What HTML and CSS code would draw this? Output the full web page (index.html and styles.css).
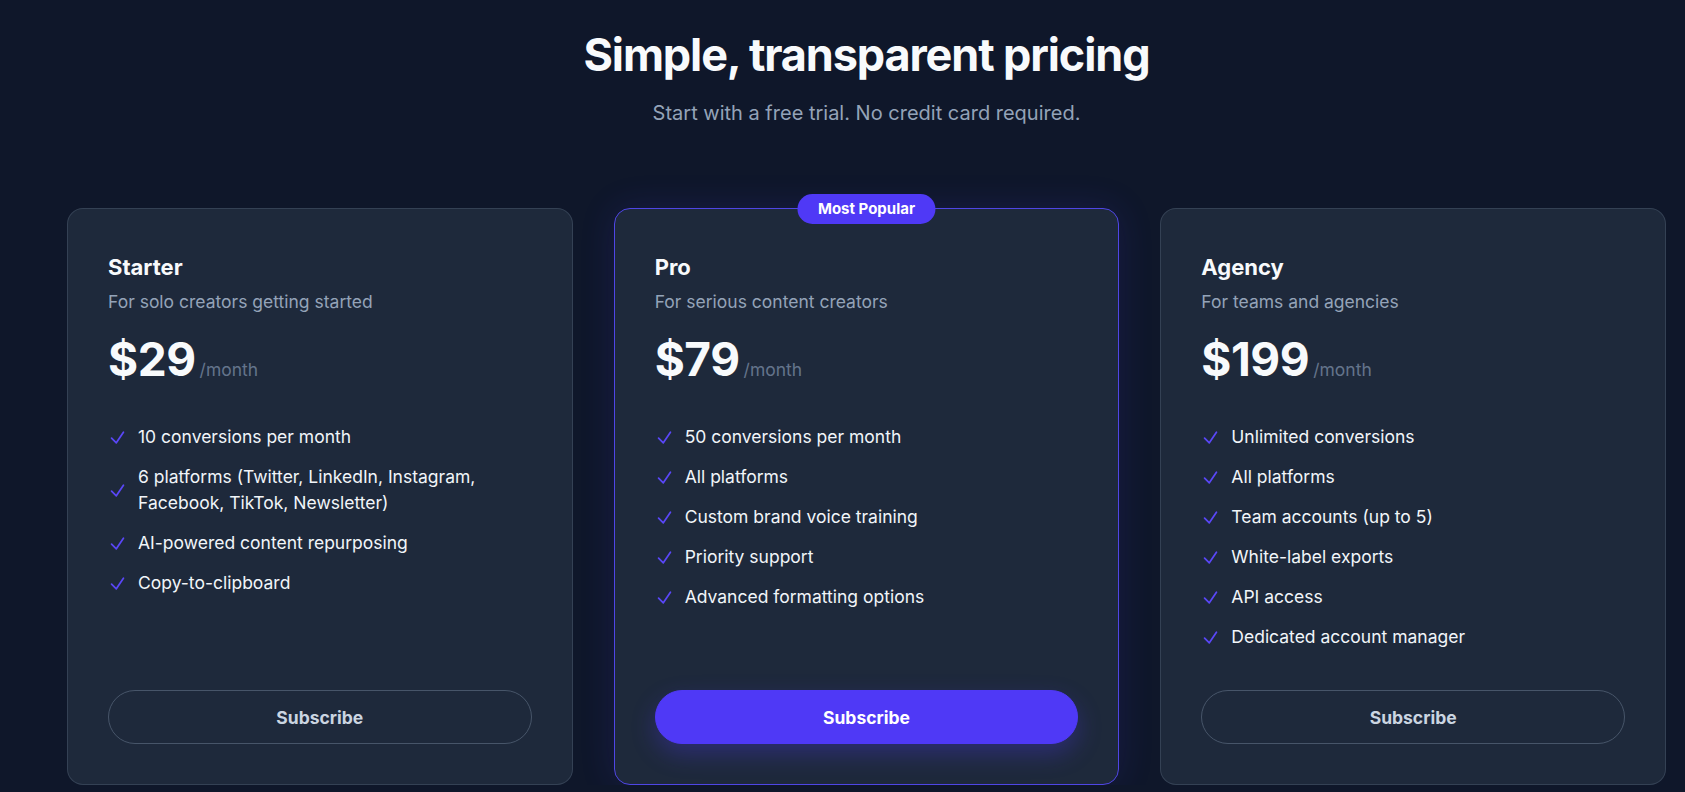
FILE: index.html
```html
<!DOCTYPE html>
<html lang="en">
<head>
  <meta charset="UTF-8">
  <meta name="viewport" content="width=device-width, initial-scale=1.0">
  <title>Pricing</title>
  <link rel="stylesheet" href="styles.css">
</head>
<body>
  <div class="pricing">
    <div class="pricing-header">
      <h1>Simple, transparent pricing</h1>
      <p class="subtitle">Start with a free trial. No credit card required.</p>
    </div>

    <div class="plans">
      <div class="plan">
        <h3 class="plan-name">Starter</h3>
        <p class="plan-description">For solo creators getting started</p>
        <div class="price">
          <span class="amount">$29</span>
          <span class="period">/month</span>
        </div>
        <ul class="features">
          <li><svg class="check" viewBox="0 0 24 24"><path d="M4.5 12.75l6 6 9-13.5"/></svg><span>10 conversions per month</span></li>
          <li><svg class="check" viewBox="0 0 24 24"><path d="M4.5 12.75l6 6 9-13.5"/></svg><span>6 platforms (Twitter, LinkedIn, Instagram, Facebook, TikTok, Newsletter)</span></li>
          <li><svg class="check" viewBox="0 0 24 24"><path d="M4.5 12.75l6 6 9-13.5"/></svg><span>AI-powered content repurposing</span></li>
          <li><svg class="check" viewBox="0 0 24 24"><path d="M4.5 12.75l6 6 9-13.5"/></svg><span>Copy-to-clipboard</span></li>
        </ul>
        <button class="subscribe">Subscribe</button>
      </div>

      <div class="plan featured">
        <div class="badge">Most Popular</div>
        <h3 class="plan-name">Pro</h3>
        <p class="plan-description">For serious content creators</p>
        <div class="price">
          <span class="amount">$79</span>
          <span class="period">/month</span>
        </div>
        <ul class="features">
          <li><svg class="check" viewBox="0 0 24 24"><path d="M4.5 12.75l6 6 9-13.5"/></svg><span>50 conversions per month</span></li>
          <li><svg class="check" viewBox="0 0 24 24"><path d="M4.5 12.75l6 6 9-13.5"/></svg><span>All platforms</span></li>
          <li><svg class="check" viewBox="0 0 24 24"><path d="M4.5 12.75l6 6 9-13.5"/></svg><span>Custom brand voice training</span></li>
          <li><svg class="check" viewBox="0 0 24 24"><path d="M4.5 12.75l6 6 9-13.5"/></svg><span>Priority support</span></li>
          <li><svg class="check" viewBox="0 0 24 24"><path d="M4.5 12.75l6 6 9-13.5"/></svg><span>Advanced formatting options</span></li>
        </ul>
        <button class="subscribe primary">Subscribe</button>
      </div>

      <div class="plan">
        <h3 class="plan-name">Agency</h3>
        <p class="plan-description">For teams and agencies</p>
        <div class="price">
          <span class="amount">$199</span>
          <span class="period">/month</span>
        </div>
        <ul class="features">
          <li><svg class="check" viewBox="0 0 24 24"><path d="M4.5 12.75l6 6 9-13.5"/></svg><span>Unlimited conversions</span></li>
          <li><svg class="check" viewBox="0 0 24 24"><path d="M4.5 12.75l6 6 9-13.5"/></svg><span>All platforms</span></li>
          <li><svg class="check" viewBox="0 0 24 24"><path d="M4.5 12.75l6 6 9-13.5"/></svg><span>Team accounts (up to 5)</span></li>
          <li><svg class="check" viewBox="0 0 24 24"><path d="M4.5 12.75l6 6 9-13.5"/></svg><span>White-label exports</span></li>
          <li><svg class="check" viewBox="0 0 24 24"><path d="M4.5 12.75l6 6 9-13.5"/></svg><span>API access</span></li>
          <li><svg class="check" viewBox="0 0 24 24"><path d="M4.5 12.75l6 6 9-13.5"/></svg><span>Dedicated account manager</span></li>
        </ul>
        <button class="subscribe">Subscribe</button>
      </div>
    </div>
  </div>
</body>
</html>
```

FILE: styles.css
```css
body {
  font-family: Inter, 'Noto Sans', sans-serif;
  margin: 0;
  background: #0f172a;
  color: #f1f5f9;
  overflow: hidden;
}

.pricing {
  width: 1599px;
  margin-left: 67px;
  padding-top: 28px;
}

.pricing-header {
  text-align: center;
}

h1 {
  font-size: 45px;
  line-height: 53px;
  font-weight: 700;
  letter-spacing: -0.025em;
  color: #f8fafc;
  margin: 0 0 18px 0;
}

.subtitle {
  font-size: 20px;
  line-height: 28px;
  color: #94a3b8;
  margin: 0;
}

.plans {
  display: grid;
  grid-template-columns: repeat(3, 1fr);
  gap: 41px;
  margin-top: 81px;
}

.plan {
  position: relative;
  display: flex;
  flex-direction: column;
  height: 577px;
  box-sizing: border-box;
  padding: 42px 40px 40px;
  background: #1e293b;
  border: 1px solid rgba(71, 85, 105, 0.55);
  border-radius: 16px;
}

.plan.featured {
  border-color: #4f46e5;
  box-shadow: 0 0 36px rgba(79, 57, 246, 0.14);
}

.badge {
  position: absolute;
  top: -15px;
  left: 50%;
  transform: translateX(-50%);
  background: #4f39f6;
  color: white;
  font-size: 15px;
  font-weight: 700;
  line-height: 30px;
  padding: 0 20px;
  border-radius: 999px;
  white-space: nowrap;
}

.plan-name {
  font-size: 22px;
  line-height: 33px;
  font-weight: 700;
  color: #f8fafc;
  margin: 0;
}

.plan-description {
  font-size: 17.5px;
  line-height: 26px;
  color: #94a3b8;
  margin: 5px 0 0 0;
}

.price {
  display: flex;
  align-items: baseline;
  gap: 4px;
  margin-top: 21px;
}

.amount {
  font-size: 46px;
  line-height: 46px;
  font-weight: 700;
  letter-spacing: -0.01em;
  color: #f8fafc;
}

.period {
  font-size: 17.5px;
  color: #64748b;
}

.features {
  list-style: none;
  padding: 0;
  margin: 42px 0 0 0;
  flex: 1;
  display: flex;
  flex-direction: column;
  gap: 14px;
}

.features li {
  display: flex;
  align-items: center;
  gap: 11px;
  font-size: 17.5px;
  line-height: 26px;
  color: #f1f5f9;
}

.check {
  flex-shrink: 0;
  width: 19px;
  height: 19px;
  fill: none;
  stroke: #5a47f7;
  stroke-width: 2.2;
  stroke-linecap: round;
  stroke-linejoin: round;
}

.subscribe {
  height: 54px;
  width: 100%;
  border-radius: 999px;
  border: 1px solid #475569;
  background: transparent;
  color: #cbd5e1;
  font-family: inherit;
  font-size: 17.5px;
  font-weight: 700;
  cursor: pointer;
}

.subscribe.primary {
  background: #4f39f6;
  border-color: #4f39f6;
  color: white;
  box-shadow: 0 10px 24px rgba(79, 57, 246, 0.3);
}
```
